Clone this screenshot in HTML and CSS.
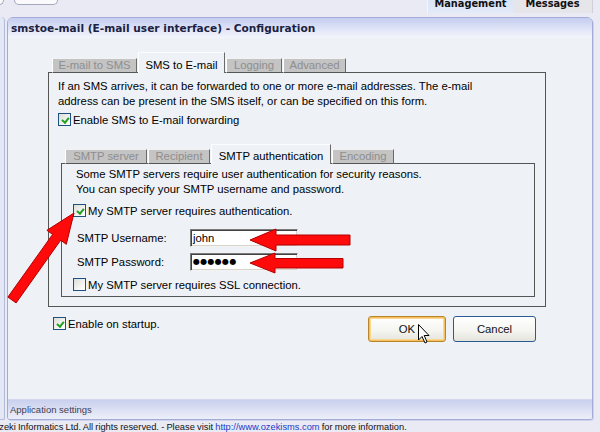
FILE: index.html
```html
<!DOCTYPE html>
<html>
<head>
<meta charset="utf-8">
<link rel="stylesheet" href="styles.css">
</head>
<body>
<div class="page">
  <div class="top">
    <div class="deco"><span class="deco-a"></span><span class="deco-b"></span></div>
    <div class="nav">
      <span class="nav-tab nav-mgmt">Management</span>
      <span class="nav-tab nav-msg">Messages</span>
    </div>
  </div>
  <div class="main">
    <div class="side"></div>
    <div class="window">
      <div class="title">smstoe-mail (E-mail user interface) - Configuration</div>
      <div class="wbody">
        <div class="tabs">
          <span class="tab ot1">E-mail to SMS</span>
          <span class="tab ot2 active">SMS to E-mail</span>
          <span class="tab ot3">Logging</span>
          <span class="tab ot4">Advanced</span>
        </div>
        <div class="panel outer">
          <p class="desc">If an SMS arrives, it can be forwarded to one or more e-mail addresses. The e-mail<br>address can be present in the SMS itself, or can be specified on this form.</p>
          <div class="check check-fwd"><span class="box on"></span><span>Enable SMS to E-mail forwarding</span></div>
          <div class="inner-wrap">
            <div class="tabs">
              <span class="tab it1">SMTP server</span>
              <span class="tab it2">Recipient</span>
              <span class="tab it3 active">SMTP authentication</span>
              <span class="tab it4">Encoding</span>
            </div>
            <div class="panel inner">
              <p class="desc desc-inner">Some SMTP servers require user authentication for security reasons.<br>You can specify your SMTP username and password.</p>
              <div class="check check-auth"><span class="box on"></span><span>My SMTP server requires authentication.</span></div>
              <div class="field field-user"><span class="flabel">SMTP Username:</span><span class="input">john</span></div>
              <div class="field field-pass"><span class="flabel">SMTP Password:</span><span class="input pw">●●●●●●</span></div>
              <div class="check check-ssl"><span class="box"></span><span>My SMTP server requires SSL connection.</span></div>
            </div>
          </div>
        </div>
        <div class="bottom-row">
          <div class="check check-start"><span class="box on"></span><span>Enable on startup.</span></div>
          <div class="buttons">
            <span class="btn btn-ok">OK</span>
            <span class="btn btn-cancel">Cancel</span>
          </div>
        </div>
      </div>
      <div class="status">Application settings</div>
    </div>
  </div>
  <div class="footer">Ozeki Informatics Ltd. All rights reserved. - Please visit <a class="link">http://www.ozekisms.com</a> for more information.</div>

  <svg class="arrows" width="600" height="432" viewBox="0 0 600 432">
    <polygon points="74,213 66.3,244.3 60.7,240.2 16.1,302.9 7.9,297.1 52.6,234.4 46.9,230.3" />
    <polygon points="250,240 276,229 276,235 350,235 350,245 276,245 276,251" />
    <polygon points="250,263 275,253 275,258.5 343,258.5 343,268 275,268 275,273" />
  </svg>
  <svg class="cursor" width="14" height="22" viewBox="0 0 14 22">
    <path d="M1.5 1.5 L1.5 17 L5 13.5 L8 20 L10 19 L7.2 12.5 L12 12.5 Z" fill="#fff" stroke="#000" stroke-width="1" stroke-linejoin="miter"/>
  </svg>
</div>
</body>
</html>
```

FILE: styles.css
```css
* { box-sizing: border-box; }
html, body { margin: 0; padding: 0; }
body {
  width: 600px;
  height: 432px;
  overflow: hidden;
  background: #e9eaf4;
  font-family: "Liberation Sans", Arial, sans-serif;
  font-size: 11.3px;
  color: #000;
}
.page { position: relative; width: 600px; height: 432px; overflow: hidden; }

/* top strip */
.top { height: 17px; display: flex; justify-content: space-between; }
.deco { display: flex; gap: 10px; margin-left: -6px; }
.deco-a, .deco-b {
  height: 6px;
  margin-top: -1px;
  border: 1px solid #a4a8bc;
  border-top: none;
  border-radius: 0 0 5px 5px;
  background: #fafafd;
}
.deco-a { width: 10px; }
.deco-b { width: 44px; }
.nav { display: flex; margin-top: -6px; margin-right: 7px; }
.nav-tab {
  height: 19px;
  line-height: 19px;
  text-align: center;
  font-family: "DejaVu Sans", Verdana, sans-serif;
  font-weight: bold;
  font-size: 9.8px;
  color: #111;
}
.nav-mgmt { width: 86px; background: linear-gradient(#d6e1f6, #e3ebf9); border-left: 1px solid #f4f6fc; }
.nav-msg { width: 80px; background: #e6e6ea; border-right: 1px solid #d0d0d8; }

/* main */
.main { display: flex; height: 403px; }
.side {
  width: 5px;
  margin-right: 2px;
  background: #e4e7f4;
  border-right: 1px solid #b3bbda;
  border-bottom: 1px solid #b3bbda;
  border-radius: 0 4px 2px 0;
}
.window {
  width: 586px;
  display: flex;
  flex-direction: column;
  background: #eef2f7;
  border: 1px solid #a3acd8;
  border-radius: 6px 6px 3px 3px;
  box-shadow: 1px 1px 0 #cfd4ec;
  overflow: hidden;
}
.title {
  height: 20px;
  line-height: 20px;
  padding-left: 3px;
  font-family: "DejaVu Sans", Verdana, sans-serif;
  font-weight: bold;
  font-size: 10.6px;
  color: #1b2142;
  background: linear-gradient(#c5cdf0, #e4e8f8 65%, #f3f5fb);
}
.wbody { flex: 1; padding: 14px 0 0 40px; }

/* tabs */
.tabs {
  display: flex;
  align-items: flex-end;
  gap: 1px;
  margin-left: 4px;
  margin-bottom: -1px;
  position: relative;
  z-index: 1;
}
.tab {
  height: 15px;
  line-height: 13px;
  text-align: center;
  background: #c4c4c4;
  color: #8e8e8e;
  border-top: 1px solid #f2f2f2;
  border-left: 1px solid #ffffff;
  border-right: 1px solid #6a6a6a;
  border-bottom: 1px solid #555;
  white-space: nowrap;
}
.tab.active {
  height: 21px;
  padding-top: 6px;
  background: #eef2f6;
  color: #000;
  border-top: 1px solid #fbfcfd;
  border-bottom: none;
}
.inner-wrap .tab.active { height: 20px; padding-top: 5px; }
.ot1 { width: 85px; }
.ot2 { width: 87px; }
.ot3 { width: 56px; }
.ot4 { width: 63px; }
.it1 { width: 82px; }
.it2 { width: 62px; }
.it3 { width: 120px; }
.it4 { width: 62px; }

.panel { border: 1px solid #555; background: #eef2f6; }
.outer { width: 498px; height: 235px; padding: 6px 0 0 9px; }
.desc { margin: 0; line-height: 15px; white-space: nowrap; }

.check { display: flex; align-items: center; gap: 2px; height: 15px; white-space: nowrap; }
.box {
  width: 13px;
  height: 13px;
  border: 1px solid #1c5180;
  background: linear-gradient(135deg, #dcdcd7, #fbfbf9 80%);
  position: relative;
  flex: none;
}
.box.on::after {
  content: "";
  position: absolute;
  left: 3.5px;
  top: 1.5px;
  width: 2.5px;
  height: 5px;
  border-right: 2px solid #21a121;
  border-bottom: 2px solid #21a121;
  transform: rotate(40deg);
}
.check-fwd { margin-top: 3px; }

.inner-wrap { margin-top: 17px; margin-left: 3px; }
.inner { width: 474px; height: 134px; padding: 3px 0 0 11px; }
.desc-inner { padding-left: 3px; }
.check-auth { margin-top: 6px; }

.field { display: flex; align-items: center; height: 18px; }
.field-user { margin-top: 11px; }
.field-pass { margin-top: 6px; }
.flabel { width: 117px; padding-left: 4px; }
.input {
  width: 108px;
  height: 18px;
  line-height: 16px;
  padding-left: 2px;
  background: #fff;
  border-top: 1px solid #7c7c7c;
  border-left: 1px solid #7c7c7c;
  border-right: 1px solid #f2f2f2;
  border-bottom: 1px solid #f2f2f2;
  box-shadow: inset 1px 1px 0 #404040, inset -1px -1px 0 #d8d5cc;
}
.pw { font-family: "DejaVu Sans", sans-serif; font-size: 8px; letter-spacing: 0.3px; }
.check-ssl { margin-top: 6px; }

.bottom-row { display: flex; width: 498px; margin-top: 9px; }
.check-start { margin-left: 5px; }
.buttons { display: flex; gap: 7px; margin-left: auto; margin-right: 10px; }
.btn {
  height: 26px;
  line-height: 24px;
  text-align: center;
  border-radius: 3px;
  background: linear-gradient(#ffffff, #f4f4f0 60%, #e4e3dc);
  color: #111;
}
.btn-ok { width: 78px; border: 1px solid #b9842e; box-shadow: inset 0 0 0 1px #f6c05e, inset 0 0 0 2px #fbd890; }
.btn-cancel { width: 83px; border: 1px solid #2a5a92; }

.status {
  height: 20px;
  line-height: 20px;
  padding-left: 2px;
  font-size: 9.5px;
  color: #3d3f55;
  border-top: 1px solid #d4d9ef;
  background: linear-gradient(#c9d0ee, #dfe3f5 60%, #eceff9);
}

.footer {
  height: 12px;
  line-height: 15px;
  margin-left: -8px;
  font-size: 9.3px;
  word-spacing: -0.4px;
  white-space: nowrap;
  color: #111;
}
.link { color: #1a3cc8; }

.arrows { position: absolute; left: 0; top: 0; pointer-events: none; }
.arrows polygon { fill: #ff0a0a; stroke: #b00000; stroke-width: 1; stroke-linejoin: miter; }
.cursor { position: absolute; left: 417px; top: 323px; pointer-events: none; }
```
